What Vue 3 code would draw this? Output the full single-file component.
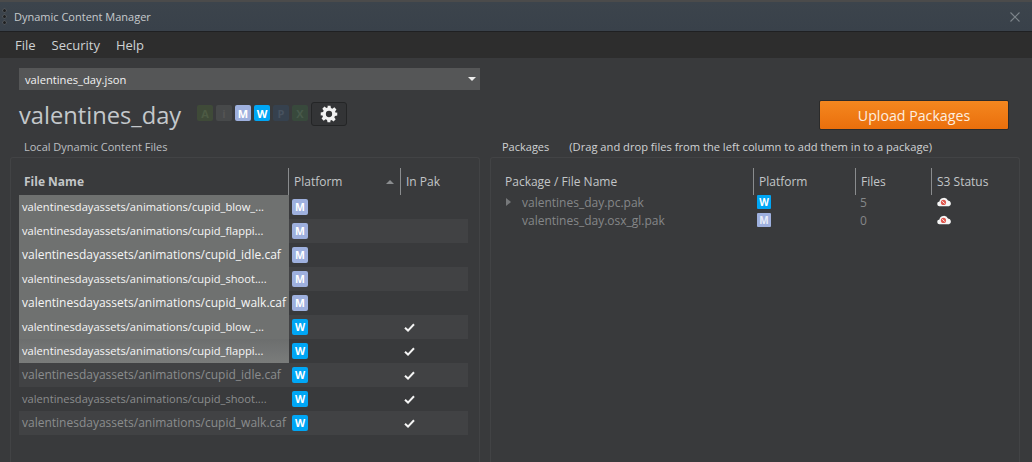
<script setup>
const badges = [
  { l: 'A', c: 'a' },
  { l: 'i', c: 'i' },
  { l: 'M', c: 'm' },
  { l: 'W', c: 'w' },
  { l: 'P', c: 'p' },
  { l: 'X', c: 'x' },
];

const files = [
  { name: 'valentinesdayassets/animations/cupid_blow_...', p: 'M', pak: false, sel: true },
  { name: 'valentinesdayassets/animations/cupid_flappi...', p: 'M', pak: false, sel: true },
  { name: 'valentinesdayassets/animations/cupid_idle.caf', p: 'M', pak: false, sel: true },
  { name: 'valentinesdayassets/animations/cupid_shoot....', p: 'M', pak: false, sel: true },
  { name: 'valentinesdayassets/animations/cupid_walk.caf', p: 'M', pak: false, sel: true },
  { name: 'valentinesdayassets/animations/cupid_blow_...', p: 'W', pak: true, sel: true },
  { name: 'valentinesdayassets/animations/cupid_flappi...', p: 'W', pak: true, sel: true, hover: true },
  { name: 'valentinesdayassets/animations/cupid_idle.caf', p: 'W', pak: true },
  { name: 'valentinesdayassets/animations/cupid_shoot....', p: 'W', pak: true },
  { name: 'valentinesdayassets/animations/cupid_walk.caf', p: 'W', pak: true },
];

const packages = [
  { name: 'valentines_day.pc.pak', p: 'W', count: 5, arrow: true },
  { name: 'valentines_day.osx_gl.pak', p: 'M', count: 0 },
];
</script>

<template>
  <div class="window">
    <div class="titlebar">
      <span class="grip"><i></i><i></i><i></i></span>
      <span class="title">Dynamic Content Manager</span>
      <svg class="close" width="10" height="10" viewBox="0 0 10 10"><path d="M0.5 0.5 L9.5 9.5 M9.5 0.5 L0.5 9.5" stroke="#7d858b" stroke-width="1.1" fill="none" /></svg>
    </div>
    <div class="menubar">
      <span>File</span><span>Security</span><span>Help</span>
    </div>
    <div class="content">
      <div class="select">
        <span>valentines_day.json</span>
        <i class="caret"></i>
      </div>
      <div class="headrow">
        <h1>valentines_day</h1>
        <div class="badges">
          <span v-for="b in badges" :key="b.l" class="bigbadge" :class="b.c">{{ b.l }}</span>
        </div>
        <button class="gear">
          <svg width="18" height="18" viewBox="0 0 24 24"><path fill="#f2f2f2" fill-rule="evenodd" d="M10 1h4l.6 3.1 1.9.8 2.6-1.8 2.8 2.8-1.8 2.6.8 1.9L23 10v4l-3.1.6-.8 1.9 1.8 2.6-2.8 2.8-2.6-1.8-1.9.8L14 23h-4l-.6-3.1-1.9-.8-2.6 1.8-2.8-2.8 1.8-2.6-.8-1.9L1 14v-4l3.1-.6.8-1.9-1.8-2.6 2.8-2.8 2.6 1.8 1.9-.8zM12 7.8a4.2 4.2 0 1 0 0 8.4 4.2 4.2 0 0 0 0-8.4z" /></svg>
        </button>
        <button class="upload">Upload Packages</button>
      </div>
      <div class="columns">
        <section class="left">
          <div class="label">Local Dynamic Content Files</div>
          <div class="panel">
            <div class="thead lthead">
              <div class="th fname"><b>File Name</b></div>
              <div class="th plat">Platform<i class="sort"></i></div>
              <div class="th">In Pak</div>
            </div>
            <div v-for="(f, i) in files" :key="i" class="row" :class="{ odd: i % 2 === 1 }">
              <div class="fcell" :class="{ sel: f.sel, hover: f.hover, elided: f.name.endsWith('...') }">{{ f.name }}</div>
              <div class="pcell"><span class="tag" :class="f.p === 'M' ? 'm' : 'w'">{{ f.p }}</span></div>
              <div class="ccell">
                <svg v-if="f.pak" width="11" height="9" viewBox="0 0 11 9"><path d="M1 4.8 L4 7.6 L10 1.2" stroke="#f4f4f4" stroke-width="2" fill="none" /></svg>
              </div>
            </div>
          </div>
        </section>
        <section class="right">
          <div class="label"><span>Packages</span><span class="hint">(Drag and drop files from the left column to add them in to a package)</span></div>
          <div class="panel rpanel">
            <div class="thead rgrid">
              <div class="th">Package / File Name</div>
              <div class="th bar">Platform</div>
              <div class="th bar">Files</div>
              <div class="th bar">S3 Status</div>
            </div>
            <div v-for="p in packages" :key="p.name" class="rgrid prow">
              <div class="pname"><i class="arrow" :class="{ off: !p.arrow }"></i>{{ p.name }}</div>
              <div class="pplat"><span class="tag small" :class="p.p === 'M' ? 'm2' : 'w'">{{ p.p }}</span></div>
              <div class="pcount">{{ p.count }}</div>
              <div class="pstat">
                <svg width="15" height="10" viewBox="0 0 15 10">
                  <path fill="#f6f6f6" d="M2.8 9.2a2.4 2.4 0 0 1-.4-4.8A4.6 4.6 0 0 1 11 3.4 3 3 0 0 1 12 9.2z" />
                  <circle cx="6.5" cy="5.4" r="2.6" fill="#e0584f" />
                  <path d="M5.3 4.2 L7.7 6.6" stroke="#f6f6f6" stroke-width="1" />
                </svg>
              </div>
            </div>
          </div>
        </section>
      </div>
    </div>
  </div>
</template>

<style scoped>
.window {
  width: 1032px;
  height: 462px;
  overflow: hidden;
  box-sizing: border-box;
  border-top: 2px solid #4b4b4b;
  background: #393a3c;
  font-family: "Open Sans", "Liberation Sans", sans-serif;
  display: flex;
  flex-direction: column;
}
.titlebar {
  height: 30px;
  flex: none;
  box-sizing: border-box;
  display: flex;
  align-items: center;
  padding-left: 3px;
  background: linear-gradient(#3c444c, #39414a);
  border-bottom: 1px solid #1f2022;
  color: #c6cacd;
  font-size: 11px;
}
.grip {
  display: flex;
  flex-direction: column;
  gap: 3px;
  margin-right: 8px;
}
.grip i {
  width: 3px;
  height: 3px;
  border-radius: 50%;
  background: #1d1f21;
  box-shadow: 0 0 0 0.5px #666;
}
.title { flex: 1; }
.close { margin-right: 12px; }
.menubar {
  height: 26px;
  flex: none;
  display: flex;
  align-items: center;
  gap: 16px;
  padding-left: 15px;
  background: #2d2d2d;
  color: #cfd2d4;
  font-size: 13px;
}
.content {
  flex: 1;
  min-height: 0;
  display: flex;
  flex-direction: column;
  padding: 10px 12px 0 12px;
}
.select {
  width: 461px;
  height: 22px;
  margin-left: 7px;
  box-sizing: border-box;
  display: flex;
  align-items: center;
  justify-content: space-between;
  padding: 0 4px 0 6px;
  background: #555657;
  color: #f2f2f2;
  font-size: 11.2px;
}
.caret {
  width: 0;
  height: 0;
  border-left: 4px solid transparent;
  border-right: 4px solid transparent;
  border-top: 4px solid #eee;
}
.headrow {
  display: flex;
  align-items: center;
  height: 36px;
  margin-top: 7px;
  margin-left: 7px;
}
h1 {
  margin: 0;
  font-size: 23.7px;
  font-weight: 400;
  color: #c4c8cb;
  width: 178px;
  flex: none;
  line-height: 32px;
}
.badges {
  display: flex;
  gap: 3px;
  margin-bottom: 4px;
}
.bigbadge {
  width: 16px;
  height: 16px;
  border-radius: 2px;
  display: flex;
  align-items: center;
  justify-content: center;
  font-size: 11px;
  font-weight: 700;
}
.bigbadge.a { background: #3f4a38; color: #4d5a44; }
.bigbadge.i { background: #47494a; color: #555; }
.bigbadge.m { background: #9eb0de; color: #fff; }
.bigbadge.w { background: #00a6f5; color: #fff; }
.bigbadge.p { background: #36414e; color: #47525f; }
.bigbadge.x { background: #38493c; color: #47594b; }
.gear {
  margin-left: 3px;
  margin-bottom: 2px;
  width: 36px;
  height: 24px;
  box-sizing: border-box;
  display: flex;
  align-items: center;
  justify-content: center;
  padding: 0;
  background: #333436;
  border: 1px solid #242526;
  border-radius: 3px;
}
.upload {
  margin-left: auto;
  margin-right: 11px;
  width: 190px;
  height: 30px;
  box-sizing: border-box;
  background: linear-gradient(#f4871f, #ea6f0c);
  border: 1px solid #2b2b2b;
  border-radius: 2px;
  color: #fdeee0;
  font-family: inherit;
  font-size: 14.2px;
}
.columns {
  flex: 1;
  min-height: 0;
  display: flex;
  margin-top: 5px;
}
.left {
  width: 468px;
  flex: none;
  display: flex;
  flex-direction: column;
}
.right {
  flex: 1;
  margin-left: 10px;
  display: flex;
  flex-direction: column;
}
.label {
  height: 19px;
  padding-left: 12px;
  font-size: 11px;
  color: #bcbfc2;
  line-height: 17px;
}
.right .label { color: #d0d2d4; }
.hint { margin-left: 20px; font-size: 11.15px; }
.panel {
  flex: 1;
  border: 1px solid #424345;
  border-bottom: 0;
  border-radius: 3px 3px 0 0;
  margin-left: -2px;
  padding: 10px 0 0 8px;
}
.rpanel {
  margin-left: 0;
  padding: 10px 0 0 0;
}
.thead {
  height: 27px;
  display: flex;
  align-items: center;
  font-size: 12px;
  color: #c3c6c8;
}
.th {
  height: 27px;
  display: flex;
  align-items: center;
  box-sizing: border-box;
  padding-left: 5px;
}
.fname {
  width: 270px;
  flex: none;
  border-right: 1px solid #8a8c8e;
}
.plat {
  width: 112px;
  flex: none;
  border-right: 1px solid #8a8c8e;
  justify-content: space-between;
  padding-right: 6px;
}
.sort {
  width: 0;
  height: 0;
  border-left: 4px solid transparent;
  border-right: 4px solid transparent;
  border-bottom: 4px solid #8b8d8f;
}
.row {
  width: 449px;
  height: 24px;
  display: flex;
  align-items: center;
}
.row.odd { background: #414244; }
.fcell {
  width: 270px;
  height: 24px;
  flex: none;
  box-sizing: border-box;
  padding-left: 3px;
  font-size: 12px;
  line-height: 24px;
  white-space: nowrap;
  overflow: hidden;
  color: #8b8d8e;
}
.fcell.elided { font-size: 11.15px; }
.fcell.sel {
  background: #6f7170;
  color: #f6f6f6;
}
.fcell.hover {
  background: linear-gradient(#6c6e6e, #7a7c7b);
}
.pcell {
  width: 112px;
  flex: none;
  padding-left: 3px;
  box-sizing: border-box;
  display: flex;
}
.ccell {
  flex: 1;
  display: flex;
  padding-left: 3px;
}
.tag {
  width: 16px;
  height: 16px;
  border-radius: 2px;
  display: flex;
  align-items: center;
  justify-content: center;
  font-size: 10.5px;
  font-weight: 700;
  color: #fff;
}
.tag.m { background: #9eb0de; }
.tag.m2 { background: #9eb0de; color: #e9edf8; }
.tag.w { background: #00a6f5; }
.tag.small {
  width: 14px;
  height: 14px;
  font-size: 10px;
  border-radius: 1px;
}
.rgrid {
  display: grid;
  grid-template-columns: 253px 102px 76px 1fr;
  padding-left: 9px;
}
.rpanel .thead { margin-bottom: -2px; }
.bar { border-left: 1px solid #8a8c8e; }
.prow {
  height: 18px;
  align-items: center;
  font-size: 12px;
  color: #858789;
}
.pname {
  display: flex;
  align-items: center;
}
.arrow {
  width: 0;
  height: 0;
  margin: 0 11px 0 6px;
  border-top: 4px solid transparent;
  border-bottom: 4px solid transparent;
  border-left: 5px solid #77797b;
}
.arrow.off { visibility: hidden; }
.pplat { padding-left: 4px; display: flex; }
.pcount { padding-left: 5px; }
.pstat { padding-left: 6px; display: flex; }
</style>
